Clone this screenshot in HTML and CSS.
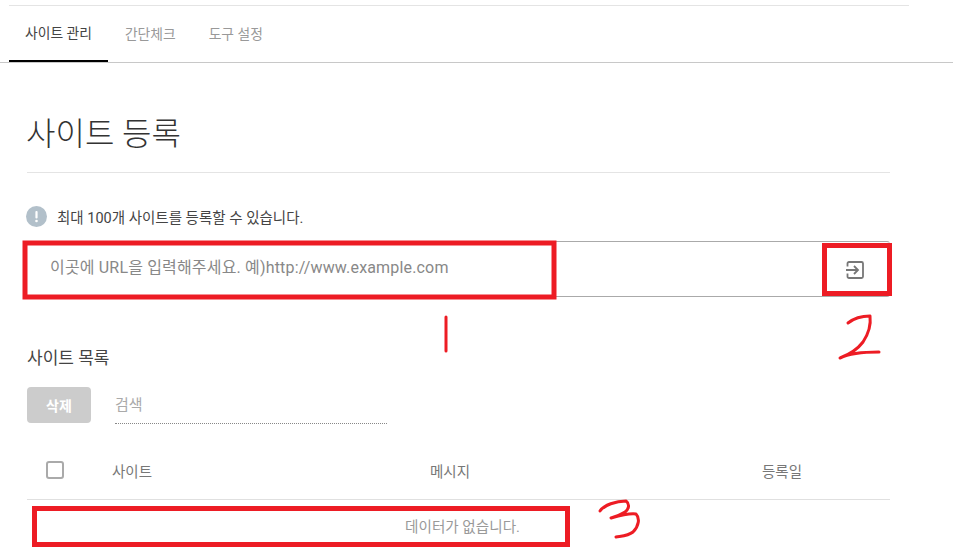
FILE: index.html
```html
<!DOCTYPE html>
<html lang="ko">
<head>
<meta charset="utf-8">
<title>사이트 관리</title>
<link rel="stylesheet" href="styles.css">
</head>
<body>
<div class="page">
  <div class="topline"></div>
  <nav class="tabs">
    <a class="tab active">사이트 관리</a>
    <a class="tab">간단체크</a>
    <a class="tab">도구 설정</a>
  </nav>
  <main class="content">
    <h1 class="title">사이트 등록</h1>
    <p class="notice">
      <svg class="notice-icon" width="21" height="21" viewBox="0 0 21 21"><circle cx="10.5" cy="10.5" r="10.5" fill="#b2c0ca"/><rect x="9.4" y="5" width="2.2" height="7.5" rx="1" fill="#fff"/><circle cx="10.5" cy="15" r="1.3" fill="#fff"/></svg>
      <span>최대 100개 사이트를 등록할 수 있습니다.</span>
    </p>
    <form class="url-box">
      <input class="url-input" type="text" placeholder="이곳에 URL을 입력해주세요. 예)http://www.example.com">
      <button class="url-submit" type="button" aria-label="등록">
        <svg width="18" height="18" viewBox="0 0 18 18" fill="none" stroke="#777" stroke-width="1.8"><path d="M1.500 5.500V2.500A1.500 1.500 0 0 1 3 1H15.500A1.500 1.500 0 0 1 17 2.500V15.500A1.500 1.500 0 0 1 15.500 17H3A1.500 1.500 0 0 1 1.500 15.500V12.500"/><path d="M0 9H12M8 5L12 9L8 13"/></svg>
      </button>
    </form>
    <h2 class="subtitle">사이트 목록</h2>
    <div class="toolbar">
      <button class="delete" type="button">삭제</button>
      <input class="search" type="text" placeholder="검색">
    </div>
    <div class="table-row table-head">
      <span class="check"></span>
      <span>사이트</span>
      <span>메시지</span>
      <span>등록일</span>
    </div>
    <div class="empty">데이터가 없습니다.</div>
  </main>
</div>
<svg class="marks" width="953" height="558" viewBox="0 0 953 558" fill="none" stroke="#ed1c24">
  <rect x="25" y="243" width="529" height="54" stroke-width="5"/>
  <rect x="824.500" y="245.500" width="65" height="48" stroke-width="5"/>
  <rect x="34.500" y="508.500" width="533" height="36" stroke-width="5"/>
  <g stroke-width="3" stroke-linecap="round" stroke-linejoin="round">
    <path d="M446 317V351"/>
    <path d="M848 323C853 319 862 316 870 316C871 324 869 333 863 342C857 350 848 355 840 358C850 353 865 352 879 352"/>
    <path d="M600 511C604 505 616 501 626 501C630 504 629 509 625 512C620 515 615 517 611 518C618 516 628 513 636 514C640 518 639 526 633 532C628 536 622 536 616 537"/>
  </g>
</svg>
</body>
</html>
```
FILE: styles.css
```css
* { box-sizing: border-box; }
html, body { margin: 0; padding: 0; background: #fff; }
body {
  width: 953px;
  height: 558px;
  overflow: hidden;
  position: relative;
  font-family: Roboto, "Noto Sans CJK KR", sans-serif;
  color: #333;
}
.page { padding-top: 5px; }
.topline { height: 1px; margin: 0 44px 0 9px; background: #e4e4e4; }
.tabs {
  display: flex;
  height: 57px;
  padding-left: 9px;
  border-bottom: 1px solid #c8c8c8;
}
.tab {
  display: flex;
  align-items: center;
  height: 56px;
  padding: 0 16px 2px;
  margin-right: 1px;
  font-size: 13.800px;
  color: #999;
  white-space: nowrap;
}
.tab.active {
  color: #444;
  border-bottom: 2px solid #000;
  height: 56px;
}
.content { padding: 0 63px 0 27px; }
.title {
  margin: 0;
  padding: 48px 0 16px;
  height: 110px;
  font-size: 32px;
  line-height: 46px;
  font-weight: 300;
  text-indent: -1px;
  color: #333;
  border-bottom: 1px solid #e4e4e4;
}
.notice {
  display: flex;
  align-items: center;
  gap: 10px;
  margin: 0 0 0 -1px;
  height: 68px;
  padding: 18px 0 0;
  font-size: 14.500px;
  color: #444;
}
.notice-icon { flex: none; }
.url-box {
  display: flex;
  height: 56px;
  border-top: 1px solid #aaa;
  border-bottom: 1px solid #aaa;
  border-right: 1px solid #ccc;
  border-radius: 0 3px 3px 0;
}
.url-input {
  flex: 1;
  border: 0;
  outline: 0;
  padding: 0 0 3px 23px;
  font: inherit;
  font-size: 16px;
  letter-spacing: 0.170px;
}
.url-input::placeholder { color: #888; opacity: 1; }
.url-submit {
  display: flex;
  align-items: center;
  justify-content: center;
  width: 68px;
  border: 0;
  background: none;
  padding: 1px 1px 0 0;
}
.subtitle {
  margin: 0;
  padding-top: 49px;
  height: 90px;
  font-size: 17px;
  line-height: 24px;
  font-weight: 400;
  color: #444;
}
.toolbar { display: flex; gap: 24px; height: 37px; }
.delete {
  width: 64px;
  height: 36px;
  border: 0;
  border-radius: 4px;
  background: #ccc;
  color: #fff;
  font: inherit;
  font-size: 14px;
  font-weight: 700;
}
.search {
  width: 272px;
  height: 37px;
  border: 0;
  border-bottom: 1px dotted #888;
  outline: 0;
  padding: 0;
  font: inherit;
  font-size: 15px;
}
.search::placeholder { color: #aaa; opacity: 1; }
.table-row {
  display: grid;
  grid-template-columns: 85px 318px 332px 1fr;
  align-items: center;
}
.table-head {
  height: 76px;
  padding: 17px 0 0;
  border-bottom: 1px solid #e0e0e0;
  font-size: 14.500px;
  color: #777;
}
.check {
  display: block;
  width: 18px;
  height: 18px;
  margin-left: 19px;
  border: 2px solid #aaa;
  border-radius: 3px;
}
.empty {
  height: 50px;
  padding: 4px 0 0 8px;
  line-height: 46px;
  text-align: center;
  font-size: 14.600px;
  color: #999;
}
.marks { position: absolute; left: 0; top: 0; pointer-events: none; }
```
